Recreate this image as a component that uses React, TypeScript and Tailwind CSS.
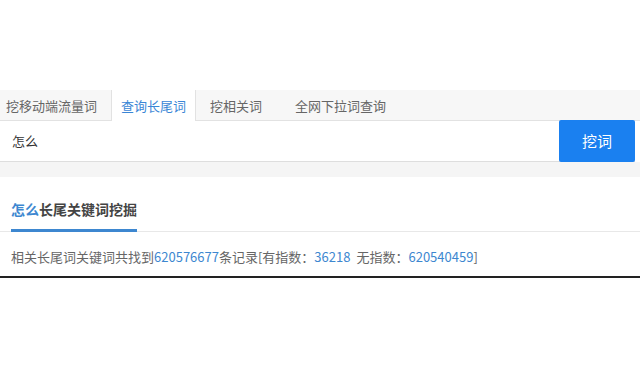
const tabs = [
  { label: "挖移动端流量词", cls: "pl-[6px] pr-[14px]" },
  { label: "查询长尾词", cls: "px-[9px]", active: true },
  { label: "挖相关词", cls: "px-[14px]" },
  { label: "全网下拉词查询", cls: "pl-[19px] pr-[13px]" },
];

export default function App() {
  return (
    <div
      className="h-[369px] w-[640px] bg-white text-[13px] text-[#555]"
      style={{ fontFamily: '"Noto Sans CJK SC", "Noto Sans", sans-serif' }}
    >
      <div className="h-[90px]" />

      {/* 标签栏 */}
      <div className="flex h-[31px] border-b border-[#e2e2e2] bg-[#f7f7f7]">
        {tabs.map((t) => (
          <div
            key={t.label}
            className={
              "flex h-[31px] items-center leading-none " +
              t.cls +
              (t.active
                ? " -mb-px h-[31px] border-x border-[#e2e2e2] bg-white text-[#3a86d6]"
                : " text-[#666]")
            }
          >
            {t.label}
          </div>
        ))}
      </div>

      {/* 搜索框 */}
      <div className="flex h-[41px] w-[635px] border-b border-[#dedede]">
        <div className="flex flex-1 items-center pl-[12px] text-[#333]">怎么</div>
        <button
          type="button"
          className="-mt-px h-[42px] w-[76px] rounded-[2px] bg-[#1a80f0] text-[15px] text-white"
        >
          挖词
        </button>
      </div>

      <div className="h-[15px] bg-[#f5f5f5]" />

      {/* 结果标题 */}
      <div className="flex h-[55px] items-end border-b border-[#e8e8e8]">
        <div className="-mb-px ml-[11px] flex h-[37px] items-start border-b-[3px] border-[#3d87d0] pt-[4px] text-[14px] font-bold text-[#444]">
          <span className="text-[#3d87d0]">怎么</span>长尾关键词挖掘
        </div>
      </div>

      <div className="flex h-[44px] items-center pl-[11px] pt-[6px] text-[#666]">
        相关长尾词关键词共找到
        <span className="text-[#3d87d0]">620576677</span>条记录[有指数：
        <span className="text-[#3d87d0]">36218</span>
        <span className="ml-[6px]">无指数：</span>
        <span className="text-[#3d87d0]">620540459</span>]
      </div>

      <div className="h-[2px] bg-[#222]" />
    </div>
  );
}
